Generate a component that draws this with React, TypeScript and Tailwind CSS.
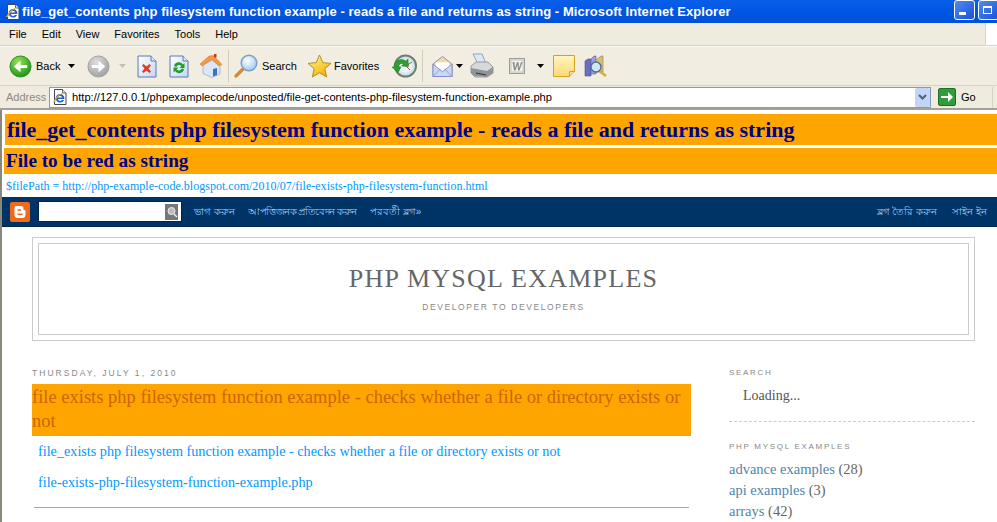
/**
 * IE6 window showing a PHP example page with an embedded blogger page below it
 */

const chrome = { fontFamily: '"Liberation Sans", Arial, sans-serif' }

function IeIcon({ className = '' }: { className?: string }) {
  return (
    <svg viewBox="0 0 16 16" className={className}>
      <path d="M2.500 0.500h8l3.500 3.500v11.500H2.500z" fill="#fff" stroke="#444" strokeWidth="1" />
      <path d="M10.500 0.500v3.500H14" fill="#dfe8f8" stroke="#444" strokeWidth="0.8" />
      <path
        d="M8 5a4.300 4.300 0 0 0-4.300 4.300A4.300 4.300 0 0 0 8 13.600c1.900 0 3.400-1 4-2.600H9.900c-.4.700-1 1-1.800 1-1.100 0-2-.8-2.100-2h6.300c.1-.3.100-.5.100-.8A4.300 4.300 0 0 0 8 5zM6 8.500c.2-1 1-1.700 2-1.700s1.800.7 2 1.700z"
        fill="#1a63d8"
      />
      <path d="M1 13c2.500-5 7-9 12-10-3 1-8 5-10 10z" fill="#e8a020" />
    </svg>
  )
}

function RoundArrow({ id, from, to, stroke }: { id: string; from: string; to: string; stroke: string }) {
  const flip = id === 'fwd'
  return (
    <svg viewBox="0 0 24 24" className="w-[23px] h-[23px]">
      <defs>
        <radialGradient id={id} cx="40%" cy="30%" r="75%">
          <stop offset="0" stopColor={from} />
          <stop offset="1" stopColor={to} />
        </radialGradient>
      </defs>
      <circle cx="12" cy="12" r="11" fill={`url(#${id})`} stroke={stroke} strokeWidth="1" />
      <path
        d={flip ? 'M5 10.500h7V6l7 6-7 6v-4.500H5z' : 'M19 10.500h-7V6l-7 6 7 6v-4.500h7z'}
        fill="#fff"
      />
    </svg>
  )
}

function Caret({ color = '#000' }: { color?: string }) {
  return (
    <svg viewBox="0 0 7 4" className="w-[7px] h-[4px]">
      <path d="M0 0h7L3.500 4z" fill={color} />
    </svg>
  )
}

function PageIcon({ children }: { children: React.ReactNode }) {
  return (
    <svg viewBox="0 0 20 23" className="w-[20px] h-[23px]">
      <defs>
        <linearGradient id="pg" x1="0" y1="0" x2="1" y2="1">
          <stop offset="0" stopColor="#ffffff" />
          <stop offset="1" stopColor="#c4d6f4" />
        </linearGradient>
      </defs>
      <path d="M1 1h13l5 5v16H1z" fill="url(#pg)" stroke="#5a78b4" />
      <path d="M14 1v5h5" fill="#dfe8f8" stroke="#5a78b4" />
      {children}
    </svg>
  )
}

function HomeIcon() {
  return (
    <svg viewBox="0 0 24 24" className="w-[24px] h-[24px]">
      <path d="M4 11l9-5 8 6v8l-8 3.500-9-4z" fill="#dbe6f7" stroke="#8fa8cf" strokeWidth="0.7" />
      <path d="M14 15l4-1v7l-4 1.500z" fill="#3f72c0" />
      <path d="M1 10L10 2l4.500-0.500L23 10.500l-3 1.500-7-6.500-10 6.500z" fill="#f59a3c" stroke="#d9772a" strokeWidth="0.5" />
      <rect x="15" y="0" width="2.500" height="3.500" fill="#c0392b" />
    </svg>
  )
}

function SearchIcon() {
  return (
    <svg viewBox="0 0 25 24" className="w-[25px] h-[24px]">
      <defs>
        <radialGradient id="lens" cx="40%" cy="35%" r="70%">
          <stop offset="0" stopColor="#ffffff" />
          <stop offset="1" stopColor="#9cc6ee" />
        </radialGradient>
      </defs>
      <path d="M2 22l7-7" stroke="#d98a2b" strokeWidth="3.200" strokeLinecap="round" />
      <circle cx="15" cy="9" r="7.800" fill="url(#lens)" stroke="#7ea0c4" strokeWidth="1.500" />
    </svg>
  )
}

function StarIcon() {
  return (
    <svg viewBox="0 0 25 24" className="w-[25px] h-[24px]">
      <defs>
        <linearGradient id="star" x1="0" y1="0" x2="0.6" y2="1">
          <stop offset="0" stopColor="#fff8a0" />
          <stop offset="1" stopColor="#f5b400" />
        </linearGradient>
      </defs>
      <path
        d="M12.500 1l3.300 7.600 8.200.8-6.200 5.400 1.900 8.200-7.200-4.300-7.200 4.300 1.900-8.200L1 9.400l8.200-.8z"
        fill="url(#star)"
        stroke="#a8871a"
        strokeWidth="0.9"
      />
    </svg>
  )
}

function HistoryIcon() {
  return (
    <svg viewBox="0 0 25 24" className="w-[25px] h-[24px]">
      <circle cx="13.500" cy="12" r="10.500" fill="#cfe3f2" stroke="#6d7f70" strokeWidth="2" />
      <circle cx="13.500" cy="12" r="7" fill="#e8f2fa" />
      <path d="M14 12l6-4M14 12l4 4" stroke="#c0503c" strokeWidth="1" />
      <path d="M2 13a7.500 7.500 0 0 1 12-6l2-2 .5 7.500-7-.5 2-2c-2-1.200-4-.4-5 2.500l2.500.5-3 5.500L0 13z" fill="#2f9e2f" stroke="#1c6e1c" strokeWidth="0.5" />
    </svg>
  )
}

function MailIcon() {
  return (
    <svg viewBox="0 0 22 24" className="w-[21px] h-[24px]">
      <path d="M1 10l10-8 10 8v13H1z" fill="#f4d9a0" stroke="#8a8ac4" />
      <path d="M4 8h14v6l-7 4-7-4z" fill="#fff" />
      <path d="M1 10l10 8 10-8v13H1z" fill="#c7daf5" stroke="#8a8ac4" />
      <path d="M1 23l8-8M21 23l-8-8" stroke="#8a8ac4" strokeWidth="0.8" />
    </svg>
  )
}

function PrinterIcon() {
  return (
    <svg viewBox="0 0 24 26" className="w-[24px] h-[26px]">
      <path d="M3 1h9l4 10H8z" fill="#dce8f6" stroke="#7f93b0" strokeWidth="0.8" />
      <path d="M1 13l5-4h12l5 5v6l-6 4H5l-4-4z" fill="#d6d8da" stroke="#888" strokeWidth="0.8" />
      <path d="M1 15l16 3 6-4v6l-6 4-12-1-4-3z" fill="#8f9497" />
      <path d="M6 20l10 2" stroke="#333" strokeWidth="1.200" />
    </svg>
  )
}

function WordIcon() {
  return (
    <svg viewBox="0 0 16 16" className="w-[16px] h-[16px]">
      <rect x="0.500" y="0.500" width="15" height="15" fill="#e4e4e0" stroke="#9c9c98" />
      <rect x="2" y="2" width="12" height="12" fill="#f2f2ee" stroke="#c4c4c0" />
      <path d="M3.500 4h2l.5 6 2-6h1.500l.5 6 2-6h1.500l-3 8.500H9L8.500 7l-2 5.500H5z" fill="#8e8e8a" />
    </svg>
  )
}

function NoteIcon() {
  return (
    <svg viewBox="0 0 22 22" className="w-[22px] h-[22px]">
      <defs>
        <linearGradient id="note" x1="0" y1="0" x2="0" y2="1">
          <stop offset="0" stopColor="#fff6c0" />
          <stop offset="1" stopColor="#fdd873" />
        </linearGradient>
      </defs>
      <path d="M0.500 0.500h21v16l-5 5h-16z" fill="url(#note)" stroke="#d9a11c" />
      <path d="M16.500 21.500v-5h5" fill="#f7d98a" stroke="#d9a11c" />
    </svg>
  )
}

function ResearchIcon() {
  return (
    <svg viewBox="0 0 23 22" className="w-[23px] h-[22px]">
      <path d="M1 6l3-2h3v17H1z" fill="#6a6ec0" stroke="#4a4e98" strokeWidth="0.6" />
      <path d="M7 4l3-3h2v18H7z" fill="#9b9ed8" stroke="#5a5ea8" strokeWidth="0.6" />
      <path d="M12 5l5-4h2v16h-7z" fill="#d8bd7c" stroke="#917c48" strokeWidth="0.6" />
      <path d="M14 15l8 6" stroke="#d9a93c" strokeWidth="2.400" />
      <circle cx="12" cy="12" r="5" fill="#cfe6f7" stroke="#52708c" strokeWidth="1.400" />
    </svg>
  )
}

function GoArrow() {
  return (
    <svg viewBox="0 0 18 18" className="w-[18px] h-[18px]">
      <rect x="0.500" y="0.500" width="17" height="17" rx="1.500" fill="#2f9d3a" stroke="#1c6e28" />
      <path d="M3 8h7V4l5 5-5 5v-4H3z" fill="#fff" />
    </svg>
  )
}

function TitleBar() {
  return (
    <div className="h-[23px] shrink-0 flex items-center bg-gradient-to-b from-[#0a5fe8] via-[#0055e3] to-[#0350d8]">
      <IeIcon className="w-[16px] h-[16px] ml-[5px]" />
      <div className="ml-[1px] text-[13px] font-bold text-white tracking-[0.055px] whitespace-nowrap" style={chrome}>
        file_get_contents php filesystem function example - reads a file and returns as string - Microsoft Internet Explorer
      </div>
      <div className="ml-auto self-start flex gap-[3px] -mr-[2px]">
        <div className="w-[21px] h-[20px] rounded-[3px] border border-white bg-gradient-to-br from-[#4f8bf0] to-[#1c50d8] flex items-end pl-[4px] pb-[4px]">
          <div className="w-[7px] h-[3px] bg-white" />
        </div>
        <div className="w-[21px] h-[20px] rounded-[3px] border border-white bg-gradient-to-br from-[#4f8bf0] to-[#1c50d8] flex items-center pl-[4px]">
          <div className="w-[9px] h-[8px] border border-white border-t-2" />
        </div>
      </div>
    </div>
  )
}

function MenuBar() {
  return (
    <div className="h-[23px] shrink-0 flex bg-[#efebde] border-b border-[#d8d4c4]" style={chrome}>
      <div className="flex items-center gap-[15px] pl-[9px] text-[11px] text-black">
        <span>File</span>
        <span>Edit</span>
        <span>View</span>
        <span>Favorites</span>
        <span>Tools</span>
        <span>Help</span>
      </div>
      <div className="ml-auto w-[12px] bg-white border-l border-[#d8d4c4]" />
    </div>
  )
}

function Toolbar() {
  return (
    <div className="h-[40px] shrink-0 flex items-center bg-[#f1eee1] border-y border-[#fbfaf4] border-b-[#d8d4c4] text-[11px] text-black" style={chrome}>
      <div className="ml-[9px]"><RoundArrow id="back" from="#9be35a" to="#16900f" stroke="#2a8a2a" /></div>
      <span className="ml-[4px] w-[28px]">Back</span>
      <div className="ml-[4px]"><Caret /></div>
      <div className="ml-[12px]"><RoundArrow id="fwd" from="#dedede" to="#9e9e9e" stroke="#a0a0a0" /></div>
      <div className="ml-[9px]"><Caret color="#c4c2b8" /></div>
      <div className="ml-[11px]">
        <PageIcon>
          <path d="M6.500 9l3 2.500 3-2.500 1.500 1.500-2.600 3 2.600 3-1.500 1.500-3-2.500-3 2.500L5 16.500l2.600-3L5 10.500z" fill="#e8391c" />
        </PageIcon>
      </div>
      <div className="ml-[12px]">
        <PageIcon>
          <path d="M5 11a5 5 0 0 1 9-1.500l1.500-1.500v5h-5l1.800-1.800a2.800 2.800 0 0 0-5 .8z" fill="#1f9e2c" />
          <path d="M15 14a5 5 0 0 1-9 2l-1.500 1.500v-5h5l-1.800 1.800a2.800 2.800 0 0 0 5-.8z" fill="#1f9e2c" />
        </PageIcon>
      </div>
      <div className="ml-[10px]"><HomeIcon /></div>
      <div className="ml-[5px] w-[1px] h-[32px] bg-[#cfcbb8]" />
      <div className="ml-[5px]"><SearchIcon /></div>
      <span className="ml-[3px] w-[35px]">Search</span>
      <div className="ml-[10px]"><StarIcon /></div>
      <span className="ml-[2px] w-[46px]">Favorites</span>
      <div className="ml-[12px]"><HistoryIcon /></div>
      <div className="ml-[5px] w-[1px] h-[32px] bg-[#cfcbb8]" />
      <div className="ml-[9px]"><MailIcon /></div>
      <div className="ml-[3px]"><Caret /></div>
      <div className="ml-[7px]"><PrinterIcon /></div>
      <div className="ml-[15px]"><WordIcon /></div>
      <div className="ml-[12px]"><Caret /></div>
      <div className="ml-[9px]"><NoteIcon /></div>
      <div className="ml-[9px]"><ResearchIcon /></div>
    </div>
  )
}

function AddressBar() {
  return (
    <div className="h-[24px] shrink-0 flex items-center bg-[#efebde] border-b-2 border-[#a5a294]" style={chrome}>
      <span className="ml-[6px] w-[43px] text-[11px] text-[#8c8a80]">Address</span>
      <div className="w-[882px] h-[21px] flex items-center bg-white border border-[#7f9db9]">
        <IeIcon className="ml-[2px] w-[16px] h-[16px]" />
        <span className="ml-[4px] text-[11.170px] text-black whitespace-nowrap">
          http://127.0.0.1/phpexamplecode/unposted/file-get-contents-php-filesystem-function-example.php
        </span>
        <div className="ml-auto mr-[0px] w-[15px] h-[19px] rounded-[2px] bg-[#c3d5f7] flex items-center justify-center">
          <svg viewBox="0 0 9 6" className="w-[9px] h-[6px]">
            <path d="M1 1l3.500 3.500L8 1" fill="none" stroke="#4d6185" strokeWidth="2" />
          </svg>
        </div>
      </div>
      <div className="ml-[7px]"><GoArrow /></div>
      <span className="ml-[5px] w-[13px] text-[11px] text-black">Go</span>
      <div className="ml-[18px] w-[1px] h-[21px] bg-[#d8d4c4]" />
    </div>
  )
}

function BloggerNav() {
  return (
    <div className="h-[30px] shrink-0 flex items-center bg-[#003366] border-b border-[#00234a] text-[10px] text-[#99ccff]" style={chrome}>
      <svg viewBox="0 0 20 20" className="ml-[8px] w-[20px] h-[20px]">
        <rect width="20" height="20" rx="2" fill="#f06a1c" />
        <path d="M6 4h5a2.500 2.500 0 0 1 2.500 2.500V8h1a1 1 0 0 1 1 1v3.500A3.500 3.500 0 0 1 12 16H8a3.500 3.500 0 0 1-3.500-3.500V5.500A1.500 1.500 0 0 1 6 4z" fill="#fff" />
        <path d="M7.500 8h3.500M7.500 12.200h5" stroke="#f06a1c" strokeWidth="1.500" />
      </svg>
      <div className="ml-[8px] w-[144px] h-[21px] flex items-center justify-end pr-[3px] bg-white border border-[#00234a]">
        <div className="w-[13px] h-[16px] bg-[#777] flex items-center justify-center">
          <svg viewBox="0 0 12 12" className="w-[12px] h-[12px]">
            <circle cx="5.500" cy="5" r="3.500" fill="#bbb" stroke="#eee" strokeWidth="1" />
            <path d="M8 8l3 3" stroke="#eee" strokeWidth="1.500" />
          </svg>
        </div>
      </div>
      <span className="ml-[12px] w-[40px] whitespace-nowrap">ভাগ করুন</span>
      <span className="ml-[14px] w-[108px] tracking-[-0.5px] whitespace-nowrap">আপত্তিজনক প্রতিবেদন করুন</span>
      <span className="ml-[14px] whitespace-nowrap">পরবর্তী ব্লগ»</span>
      <span className="ml-auto whitespace-nowrap">ব্লগ তৈরি করুন</span>
      <span className="ml-[15px] mr-[10px] whitespace-nowrap">সাইন ইন</span>
    </div>
  )
}

function BlogHeader() {
  return (
    <div className="ml-[30px] mr-[22px] mt-[10px] h-[104px] shrink-0 border border-[#cccccc] p-[5px]">
      <div className="h-full border border-[#cccccc] flex flex-col items-center">
        <div className="mt-[20px] text-[26px] leading-[30px] text-[#666666] tracking-[1.25px]">PHP MYSQL EXAMPLES</div>
        <div className="mt-[7px] text-[8.500px] leading-[12px] text-[#888888] tracking-[1.6px]" style={chrome}>
          DEVELOPER TO DEVELOPERS
        </div>
      </div>
    </div>
  )
}

function PostColumn() {
  return (
    <div className="w-[659px] shrink-0">
      <div className="text-[8.500px] leading-[12px] text-[#888888] tracking-[2.050px]" style={chrome}>
        THURSDAY, JULY 1, 2010
      </div>
      <div className="mt-[5px] bg-[#ffa500] text-[18.500px] leading-[24px] h-[52px] pt-[1px] text-[#cc6600]">
        file exists php filesystem function example - checks whether a file or directory exists or not
      </div>
      <div className="pl-[6px] text-[14.200px] text-[#0099ff]">
        <div className="mt-[7px] leading-[16px]">file_exists php filesystem function example - checks whether a file or directory exists or not</div>
        <div className="mt-[15px] leading-[16px]">file-exists-php-filesystem-function-example.php</div>
      </div>
      <div className="mt-[17px] mx-[2px] h-[1px] bg-[#aaa890]" />
    </div>
  )
}

function Sidebar() {
  const labels = [
    { name: 'advance examples', count: '(28)' },
    { name: 'api examples', count: '(3)' },
    { name: 'arrays', count: '(42)' },
  ]
  return (
    <div className="ml-[38px] w-[246px] shrink-0">
      <div className="text-[8px] leading-[12px] text-[#888888] tracking-[1.700px]" style={chrome}>SEARCH</div>
      <div className="mt-[9px] ml-[14px] text-[14px] leading-[16px] text-[#555555]">Loading...</div>
      <div className="mt-[17px] border-t border-dashed border-[#cccccc]" />
      <div className="mt-[19px] text-[8px] leading-[12px] text-[#888888] tracking-[1.700px]" style={chrome}>
        PHP MYSQL EXAMPLES
      </div>
      <div className="mt-[6px] text-[14.500px] leading-[21px] text-[#4f84a9]">
        {labels.map(l => (
          <div key={l.name}>
            {l.name} <span className="text-[#666666]">{l.count}</span>
          </div>
        ))}
      </div>
    </div>
  )
}

export default function App() {
  return (
    <div className="w-[997px] h-[522px] overflow-hidden flex flex-col bg-white">
      <TitleBar />
      <MenuBar />
      <Toolbar />
      <AddressBar />
      <div className="flex-1 min-h-0 flex flex-col border-l-2 border-[#8a887c]" style={{ fontFamily: '"Liberation Serif", serif' }}>
        <div className="mt-[4px] ml-[3px] h-[31px] shrink-0 bg-[#ffa500] pl-[2px] text-[22px] leading-[31px] font-bold text-[#00008b] whitespace-nowrap">
          file_get_contents php filesystem function example - reads a file and returns as string
        </div>
        <div className="mt-[3px] ml-[2px] h-[26px] shrink-0 bg-[#ffa500] pl-[2px] text-[19.200px] leading-[26px] font-bold text-[#00008b]">
          File to be red as string
        </div>
        <div className="h-[23px] shrink-0 ml-[4px] text-[12px] tracking-[0.02px] leading-[25px] text-[#0099ff]">
          $filePath = http://php-example-code.blogspot.com/2010/07/file-exists-php-filesystem-function.html
        </div>
        <BloggerNav />
        <BlogHeader />
        <div className="mt-[26px] ml-[30px] flex">
          <PostColumn />
          <Sidebar />
        </div>
      </div>
    </div>
  )
}
